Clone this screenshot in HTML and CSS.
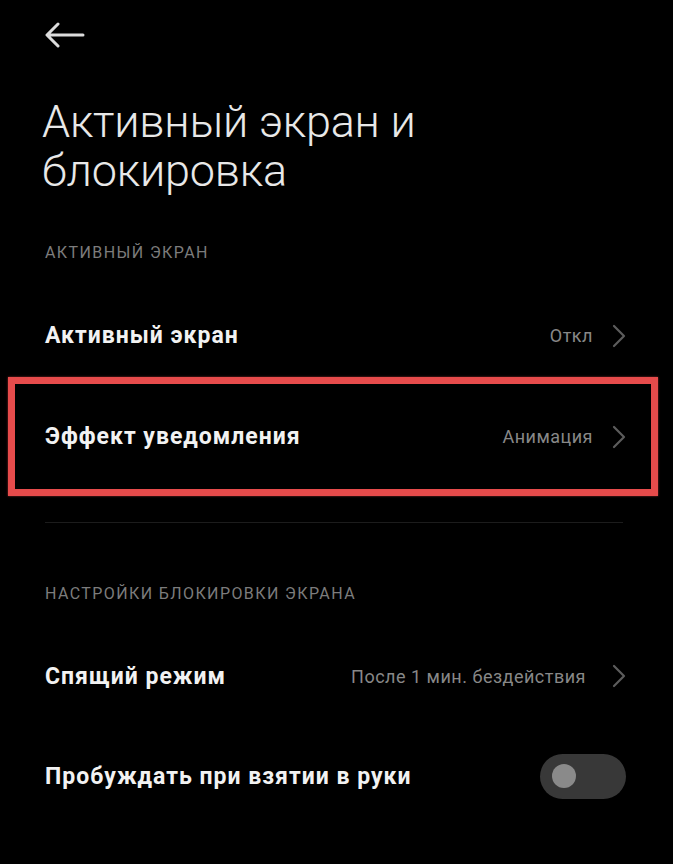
FILE: index.html
```html
<!DOCTYPE html>
<html lang="ru">
<head>
<meta charset="utf-8">
<title>Активный экран и блокировка</title>
<link rel="stylesheet" href="styles.css">
</head>
<body>
<div class="screen">
  <header class="topbar">
    <svg class="back" width="40" height="26" viewBox="0 0 40 26" aria-hidden="true">
      <path d="M38 13H3M13 2L2 13L13 24" fill="none" stroke="#dcdcdc" stroke-width="3" stroke-linecap="round" stroke-linejoin="round"/>
    </svg>
  </header>

  <h1 class="title">Активный экран и блокировка</h1>

  <div class="section-label first">АКТИВНЫЙ ЭКРАН</div>

  <div class="row big">
    <span class="row-title">Активный экран</span>
    <span class="row-end">
      <span class="value">Откл</span>
      <svg class="chev" width="14" height="24" viewBox="0 0 14 24" aria-hidden="true"><path d="M2 2L12 12L2 22" fill="none" stroke="#5c5c5c" stroke-width="2.2" stroke-linecap="round" stroke-linejoin="round"/></svg>
    </span>
  </div>

  <div class="row big highlighted">
    <span class="row-title">Эффект уведомления</span>
    <span class="row-end">
      <span class="value">Анимация</span>
      <svg class="chev" width="14" height="24" viewBox="0 0 14 24" aria-hidden="true"><path d="M2 2L12 12L2 22" fill="none" stroke="#5c5c5c" stroke-width="2.2" stroke-linecap="round" stroke-linejoin="round"/></svg>
    </span>
  </div>

  <div class="divider"></div>

  <div class="section-label second">НАСТРОЙКИ БЛОКИРОВКИ ЭКРАНА</div>

  <div class="row">
    <span class="row-title">Спящий режим</span>
    <span class="row-end wide">
      <span class="value">После 1 мин. бездействия</span>
      <svg class="chev" width="14" height="24" viewBox="0 0 14 24" aria-hidden="true"><path d="M2 2L12 12L2 22" fill="none" stroke="#5c5c5c" stroke-width="2.2" stroke-linecap="round" stroke-linejoin="round"/></svg>
    </span>
  </div>

  <div class="row">
    <span class="row-title">Пробуждать при взятии в руки</span>
    <span class="toggle"><span class="knob"></span></span>
  </div>
</div>
</body>
</html>
```

FILE: styles.css
```css
html, body {
  margin: 0;
  padding: 0;
  background: #000;
}

.screen {
  width: 673px;
  height: 864px;
  overflow: hidden;
  background: #000;
  font-family: Roboto, "Noto Sans", "Liberation Sans", sans-serif;
  color: #f0f0f0;
}

.topbar {
  height: 70px;
  display: flex;
  align-items: center;
  padding-left: 45px;
}

.back {
  display: block;
}

.title {
  margin: 27px 0 0 0;
  padding: 0 40px 0 42px;
  font-size: 45px;
  font-weight: 300;
  line-height: 49px;
  color: #e8e8e8;
  letter-spacing: -0.2px;
  width: 420px;
}

.section-label {
  padding: 0 45px;
  font-size: 16px;
  line-height: 20px;
  color: #7c7c7c;
  letter-spacing: 1.4px;
  margin-bottom: 22px;
}

.section-label.first {
  margin-top: 48px;
}

.section-label.second {
  margin-top: 61px;
}

.row {
  position: relative;
  height: 100px;
  display: flex;
  align-items: center;
  justify-content: space-between;
  padding: 0 47px 0 45px;
}

.row.big {
  height: 101px;
}

.row-title {
  font-size: 23px;
  font-weight: 700;
  letter-spacing: 1px;
  color: #f2f2f2;
}

.row-end {
  display: flex;
  align-items: center;
  gap: 19px;
}

.row-end.wide {
  gap: 26px;
}

.value {
  font-size: 18px;
  letter-spacing: 0.5px;
  color: #888;
}

.chev {
  display: block;
}

.highlighted::after {
  content: "";
  position: absolute;
  top: -9px;
  bottom: -9px;
  left: 8px;
  right: 15px;
  border: 7px solid #e64b4b;
  box-shadow: 0 0 2px rgba(230, 75, 75, 0.6);
}

.divider {
  margin: 35px 50px 0 45px;
  height: 1px;
  background: #1c1c1c;
}

.toggle {
  width: 86px;
  height: 45px;
  border-radius: 23px;
  background: #383838;
  display: flex;
  align-items: center;
  padding-left: 12px;
  box-sizing: border-box;
}

.knob {
  width: 24px;
  height: 24px;
  border-radius: 50%;
  background: #8a8a8a;
}
```
